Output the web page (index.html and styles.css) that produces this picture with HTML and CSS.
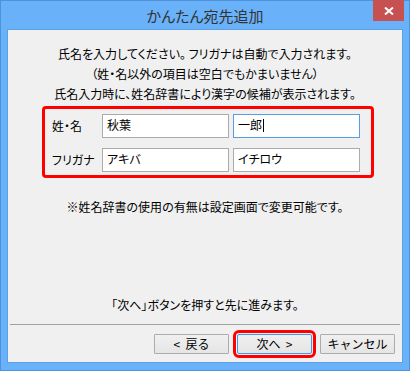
FILE: index.html
```html
<!DOCTYPE html>
<html lang="ja">
<head>
    <meta charset="UTF-8">
    <title>かんたん宛先追加</title>
    <link rel="stylesheet" href="styles.css">
</head>
<body>

<div class="window">
    <!-- Title bar -->
    <div class="titlebar">
        <span class="title">かんたん宛先追加</span>
        <div class="close">
            <svg width="10" height="8" viewBox="0 0 10 8">
                <path d="M1 0.5 L9 7.5 M9 0.5 L1 7.5" stroke="#fff" stroke-width="2" fill="none"/>
            </svg>
        </div>
    </div>

    <div class="client">
        <div class="intro">
            <p>氏名を入力してください。 フリガナは自動で入力されます。</p>
            <p>（姓・名以外の項目は空白でもかまいません）</p>
            <p>氏名入力時に、姓名辞書により漢字の候補が表示されます。</p>
        </div>

        <!-- Name fields -->
        <div class="name-box">
            <span class="label">姓・名</span>
            <div class="field">秋葉</div>
            <div class="field focused">一郎<span class="caret"></span></div>

            <span class="label">フリガナ</span>
            <div class="field">アキバ</div>
            <div class="field">イチロウ</div>
        </div>

        <p class="note">※姓名辞書の使用の有無は設定画面で変更可能です。</p>

        <div class="footer">
            <p class="hint">「次へ」ボタンを押すと先に進みます。</p>
            <div class="separator"></div>
            <div class="buttons">
                <button class="btn">&lt;&nbsp; 戻る</button>
                <button class="btn default">次へ&nbsp; &gt;</button>
                <button class="btn">キャンセル</button>
            </div>
        </div>
    </div>
</div>

</body>
</html>
```

FILE: styles.css
```css
body {
    margin: 0;
    font-family: "Noto Sans CJK JP", "Noto Sans", sans-serif;
    font-feature-settings: "palt";
}

.window {
    width: 410px;
    height: 371px;
    box-sizing: border-box;
    border: 1px solid #4f91da;
    background-color: #69b1f8;
    display: flex;
    flex-direction: column;
    position: relative;
}

.titlebar {
    height: 28px;
    display: flex;
    justify-content: center;
    align-items: center;
}

.title {
    font-size: 15px;
    color: #333;
    margin-top: 1px;
}

.close {
    position: absolute;
    top: -1px;
    right: 5px;
    width: 31px;
    height: 21px;
    background-color: #c75050;
    display: flex;
    justify-content: center;
    align-items: center;
}

.client {
    flex: 1;
    margin: 0 6px 7px 6px;
    border: 1px solid #5b9fe6;
    background-color: #f0f0f0;
    display: flex;
    flex-direction: column;
    font-size: 12px;
    color: #000;
}

.intro {
    padding-top: 14px;
    text-align: center;
}

.intro p {
    margin: 0;
    line-height: 20px;
}

.name-box {
    margin: 2px 0 0 34px;
    width: 317px;
    border: 3px solid #ff0000;
    border-radius: 4px;
    padding: 5px 2px 3px 7px;
    display: grid;
    grid-template-columns: 46px 127px 127px;
    grid-template-rows: 24px 24px;
    column-gap: 4px;
    row-gap: 10px;
    align-items: center;
}

.name-box .label {
    margin-top: -2px;
}

.field {
    height: 24px;
    box-sizing: border-box;
    border: 1px solid #ababab;
    background-color: white;
    padding: 2px 4px;
    line-height: 16px;
}

.field.focused {
    border-color: #569de5;
}

.caret {
    display: inline-block;
    width: 1px;
    height: 13px;
    background-color: #000;
    vertical-align: -2px;
    margin-left: 1px;
}

.note {
    margin: 19px 0 0 0;
    line-height: 20px;
    text-align: center;
}

.footer {
    margin-top: auto;
}

.hint {
    margin: 0;
    line-height: 20px;
    text-align: center;
}

.separator {
    margin: 9px 2px 0 2px;
    height: 1px;
    background-color: #a0a0a0;
}

.buttons {
    display: flex;
    justify-content: flex-end;
    gap: 8px;
    padding: 9px 7px 8px 0;
}

.btn {
    width: 75px;
    height: 20px;
    border: 1px solid #acacac;
    border-radius: 1px;
    background: linear-gradient(#f0f0f0, #e5e5e5);
    font-family: inherit;
    font-size: 12px;
    color: #000;
    padding: 0;
    line-height: 16px;
}

.btn.default {
    border-color: #3c9bf0;
    outline: 3px solid #ff0000;
    outline-offset: 1px;
    border-radius: 2px;
}
```
